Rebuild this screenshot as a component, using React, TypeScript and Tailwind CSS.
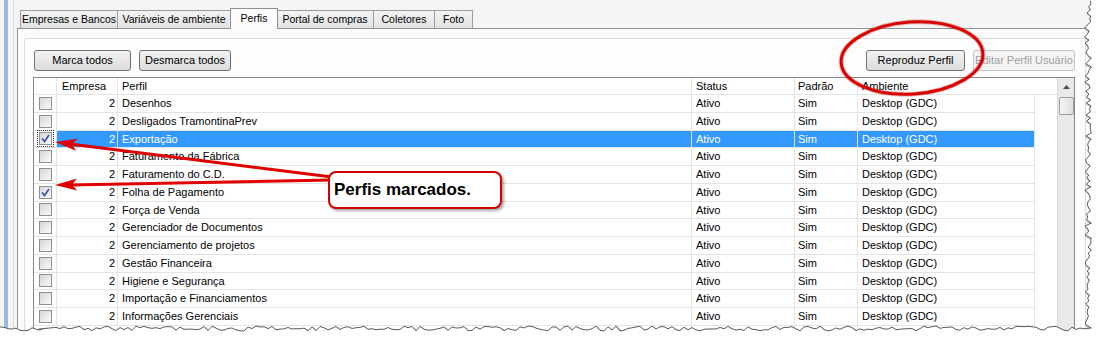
import React from "react"

type Row = { nome: string; checked?: boolean; selected?: boolean; focus?: boolean }

const rows: Row[] = [
  { nome: "Desenhos" },
  { nome: "Desligados TramontinaPrev" },
  { nome: "Exportação", checked: true, selected: true, focus: true },
  { nome: "Faturamento da Fábrica" },
  { nome: "Faturamento do C.D." },
  { nome: "Folha de Pagamento", checked: true },
  { nome: "Força de Venda" },
  { nome: "Gerenciador de Documentos" },
  { nome: "Gerenciamento de projetos" },
  { nome: "Gestão Financeira" },
  { nome: "Higiene e Segurança" },
  { nome: "Importação e Financiamentos" },
  { nome: "Informações Gerenciais" },
  { nome: "Inventário" },
]

const tabs = [
  { label: "Empresas e Bancos", w: "w-[98px]" },
  { label: "Variáveis de ambiente", w: "w-[113px]" },
  { label: "Perfis", w: "w-[48px]", active: true },
  { label: "Portal de compras", w: "w-[97px]" },
  { label: "Coletores", w: "w-[61px]" },
  { label: "Foto", w: "w-[38px]" },
]

function rnd(i: number) {
  const s = Math.sin(i * 12.9898 + 78.233) * 43758.5453
  return s - Math.floor(s)
}

function tornPoints() {
  const pts: [number, number][] = []
  for (let x = 0; x <= 1084; x += 4) pts.push([x, 328.5 + (rnd(x) - 0.5) * 5])
  for (let y = 328; y >= 0; y -= 3) pts.push([1088 + (rnd(y + 500) - 0.5) * 7, y])
  return pts
}

function arrowHead(tx: number, ty: number, fx: number, fy: number) {
  const dx = fx - tx
  const dy = fy - ty
  const len = Math.sqrt(dx * dx + dy * dy)
  const ux = dx / len
  const uy = dy / len
  const bx = tx + ux * 22
  const by = ty + uy * 22
  const nx = -uy * 6
  const ny = ux * 6
  return `${tx},${ty} ${bx + nx},${by + ny} ${tx + ux * 17},${ty + uy * 17} ${bx - nx},${by - ny}`
}

function Checkbox({ checked, focus }: { checked?: boolean; focus?: boolean }) {
  return (
    <div className={`p-px ${focus ? "outline outline-1 outline-dotted outline-[#333]" : ""}`}>
      <div className="w-[13px] h-[13px] border border-[#8f8f8f] bg-linear-to-br from-[#d6d6d6] to-[#fbfbfb] flex items-center justify-center">
        {checked && (
          <svg width="11" height="11" viewBox="0 0 11 11">
            <path d="M2 5.5 L4.5 8.5 L9 2" fill="none" stroke="#3b57a3" strokeWidth="1.7" />
          </svg>
        )}
      </div>
    </div>
  )
}

function Button({ label, w, disabled }: { label: string; w: string; disabled?: boolean }) {
  return (
    <div
      className={`${w} h-[21px] flex items-center justify-center whitespace-nowrap rounded-[3px] border ${
        disabled
          ? "border-[#c2c5c8] bg-[#f4f4f4] text-[#a0a0a0]"
          : "border-[#707070] bg-linear-to-b from-[#f3f3f3] to-[#dcdcdc] text-black"
      }`}
    >
      {label}
    </div>
  )
}

export default function App() {
  const pts = tornPoints()
  const line = pts.map((p) => p.join(",")).join(" ")
  const last = pts[pts.length - 1]
  const fill = `M0,341 L${line.replace(/ /g, " L")} L${last[0]},-1 L1101,-1 L1101,341 Z`

  return (
    <div className="relative w-[1100px] h-[340px] bg-white overflow-hidden font-['Liberation_Sans',Arial,sans-serif] text-[11px] text-black">
      <div className="flex w-[1092px] h-[333px] bg-[#f5f5f5]">
        <div className="ml-[4px] w-[4px] bg-[#9db9df]" />
        <div className="ml-[5px] w-px bg-[#dcdcdc]" />
        <div className="flex-1 flex flex-col pl-[3px] pt-[8px]">
          {/* abas */}
          <div className="flex items-end h-[20px] pl-[3px] text-[10.5px] whitespace-nowrap">
            {tabs.map((t) =>
              t.active ? (
                <div
                  key={t.label}
                  className={`${t.w} h-[21px] -mb-px relative z-10 bg-[#fcfcfc] border border-b-0 border-[#8e9297] flex items-center justify-center -mx-px`}
                >
                  {t.label}
                </div>
              ) : (
                <div
                  key={t.label}
                  className={`${t.w} h-[18px] bg-linear-to-b from-[#f3f3f3] to-[#e2e2e2] border border-b-0 border-l-0 first:border-l border-[#9a9ea3] flex items-center justify-center`}
                >
                  {t.label}
                </div>
              )
            )}
          </div>

          {/* painel */}
          <div className="flex-1 border-t border-l border-[#8e9297] bg-[#fbfbfb] pl-[6px] pt-[9px]">
            <div className="w-[1062px] h-[300px] border border-[#dcdcdc] rounded-[3px] bg-[#fdfdfd] pl-[9px] pr-[10px] pt-[11px]">
              <div className="flex justify-between">
                <div className="flex gap-[8px]">
                  <Button label="Marca todos" w="w-[97px]" />
                  <Button label="Desmarca todos" w="w-[92px]" />
                </div>
                <div className="flex gap-[8px]">
                  <Button label="Reproduz Perfil" w="w-[99px]" />
                  <Button label="Editar Perfil Usuário" w="w-[102px]" disabled />
                </div>
              </div>

              {/* grade */}
              <div className="mt-[6px] -ml-px h-[270px] border border-[#828790] bg-white flex">
                <div className="flex-1 flex flex-col">
                  <div className="flex h-[17px] border-b border-[#e3e3e3]">
                    <div className="w-[23px] border-r border-[#e3e3e3]" />
                    <div className="w-[61px] border-r border-[#e3e3e3] pl-[5px] flex items-center">Empresa</div>
                    <div className="w-[574px] border-r border-[#e3e3e3] pl-[4px] flex items-center">Perfil</div>
                    <div className="w-[103px] border-r border-[#e3e3e3] pl-[4px] flex items-center">Status</div>
                    <div className="w-[63px] border-r border-[#e3e3e3] pl-[3px] flex items-center">Padrão</div>
                    <div className="flex-1 pl-[4px] flex items-center">Ambiente</div>
                  </div>
                  {rows.map((r) => (
                    <div key={r.nome} className="flex w-[1001px] h-[17.75px] border-b border-[#e3e3e3]">
                      <div className="w-[23px] border-r border-[#e3e3e3] flex items-center justify-center">
                        <Checkbox checked={r.checked} focus={r.focus} />
                      </div>
                      <div className={`flex flex-1 ${r.selected ? "bg-[#3399ff] text-white" : ""}`}>
                        <div className="w-[61px] border-r border-[#e3e3e3] pr-[2px] flex items-center justify-end">2</div>
                        <div className="w-[574px] border-r border-[#e3e3e3] pl-[4px] flex items-center">{r.nome}</div>
                        <div className="w-[103px] border-r border-[#e3e3e3] pl-[4px] flex items-center">Ativo</div>
                        <div className="w-[63px] border-r border-[#e3e3e3] pl-[3px] flex items-center">Sim</div>
                        <div className="flex-1 border-r border-[#e3e3e3] pl-[4px] flex items-center">Desktop (GDC)</div>
                      </div>
                    </div>
                  ))}
                </div>

                {/* barra de rolagem */}
                <div className="w-[17px] bg-[#e9e9e9] border-l border-[#dadada] flex flex-col items-center">
                  <div className="h-[17px] flex items-center justify-center">
                    <svg width="7" height="4" viewBox="0 0 7 4">
                      <path d="M0 4 L3.5 0 L7 4 Z" fill="#505050" />
                    </svg>
                  </div>
                  <div className="mt-[2px] w-[15px] h-[18px] rounded-[2px] border border-[#9c9c9c] bg-linear-to-r from-[#f4f4f4] to-[#dedede]" />
                </div>
              </div>
            </div>
          </div>
        </div>
      </div>

      {/* anotações */}
      <svg className="absolute left-0 top-0" width="1100" height="340">
        <ellipse cx="912" cy="58" rx="71" ry="36" transform="rotate(-4 912 58)" fill="none" stroke="#a00" strokeOpacity="0.25" strokeWidth="5" />
        <ellipse cx="912" cy="58" rx="71" ry="36" transform="rotate(-4 912 58)" fill="none" stroke="#d80000" strokeWidth="3" />
        <line x1="332" y1="177" x2="70" y2="144" stroke="#e00000" strokeWidth="3" />
        <polygon points={arrowHead(55, 142, 332, 177)} fill="#e00000" />
        <line x1="332" y1="180" x2="70" y2="185" stroke="#e00000" strokeWidth="3" />
        <polygon points={arrowHead(55, 185, 332, 180)} fill="#e00000" />
      </svg>

      <div className="absolute left-[328px] top-[171px] w-[174px] h-[38px] rounded-[8px] border-2 border-[#d40000] bg-white shadow-[2px_2px_3px_rgba(0,0,0,0.35)] pl-[4px] flex items-center font-['Liberation_Sans',Arial,sans-serif] text-[17px] font-bold">
        Perfis marcados.
      </div>

      {/* borda rasgada */}
      <svg className="absolute left-0 top-0" width="1100" height="340">
        <polyline points={pts.map((p) => `${p[0] + 1.5},${p[1] + 1.5}`).join(" ")} fill="none" stroke="#c8c8c8" strokeWidth="2" />
        <path d={fill} fill="#ffffff" />
        <polyline points={line} fill="none" stroke="#4a4a4a" strokeWidth="0.9" />
      </svg>
    </div>
  )
}
